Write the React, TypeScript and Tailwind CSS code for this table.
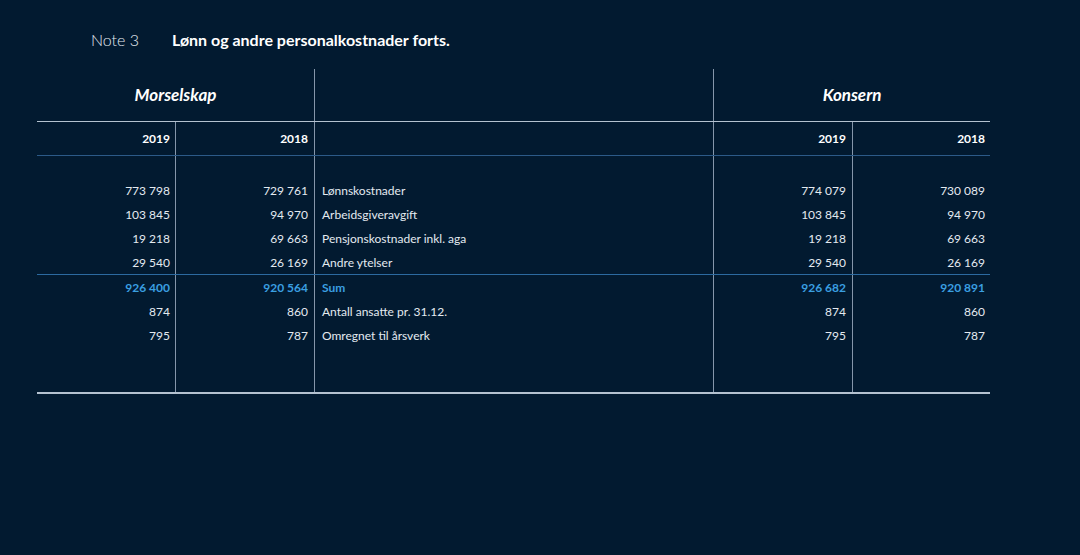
const COLS = "grid grid-cols-[139px_139px_399px_139px_137px]";

type Row = { a: string; b: string; label: string; c: string; d: string; sum?: boolean };

const ROWS: Row[] = [
  { a: "773 798", b: "729 761", label: "Lønnskostnader", c: "774 079", d: "730 089" },
  { a: "103 845", b: "94 970", label: "Arbeidsgiveravgift", c: "103 845", d: "94 970" },
  { a: "19 218", b: "69 663", label: "Pensjonskostnader inkl. aga", c: "19 218", d: "69 663" },
  { a: "29 540", b: "26 169", label: "Andre ytelser", c: "29 540", d: "26 169" },
];

const ROWS2: Row[] = [
  { a: "926 400", b: "920 564", label: "Sum", c: "926 682", d: "920 891", sum: true },
  { a: "874", b: "860", label: "Antall ansatte pr. 31.12.", c: "874", d: "860" },
  { a: "795", b: "787", label: "Omregnet til årsverk", c: "795", d: "787" },
];

function DataRow({ r }: { r: Row }) {
  const tone = r.sum ? "text-[#3a9fe0] font-bold" : "text-[#e4eaf0]";
  return (
    <div className={`${COLS} h-6 text-[12px] ${tone}`}>
      <div className="border-r border-[#8596aa] pr-[5px] pt-px flex items-center justify-end">{r.a}</div>
      <div className="border-r border-[#8596aa] pr-[6px] pt-px flex items-center justify-end">{r.b}</div>
      <div className="border-r border-[#8596aa] pl-[7px] pt-px flex items-center">{r.label}</div>
      <div className="border-r border-[#8596aa] pr-[6px] pt-px flex items-center justify-end">{r.c}</div>
      <div className="pr-[5px] pt-px flex items-center justify-end">{r.d}</div>
    </div>
  );
}

function Blank({ h }: { h: string }) {
  return (
    <div className={`${COLS} ${h}`}>
      <div className="border-r border-[#8596aa]" />
      <div className="border-r border-[#8596aa]" />
      <div className="border-r border-[#8596aa]" />
      <div className="border-r border-[#8596aa]" />
      <div />
    </div>
  );
}

export default function App() {
  return (
    <div className="w-[1080px] h-[555px] bg-[#021a30] text-white font-['Lato',sans-serif] overflow-hidden">
      <div className="flex items-baseline pl-[91px] pt-[28px] h-[69px]">
        <span className="w-[81px] text-[16px] font-light text-[#e4eaf0]">Note 3</span>
        <span className="text-[16px] font-bold">Lønn og andre personalkostnader forts.</span>
      </div>

      <div className="ml-[37px] w-[953px]">
        {/* Header */}
        <div className="grid grid-cols-[278px_399px_276px] h-[53px] border-b border-[#b4c2d0]">
          <div className="border-r border-[#8596aa] flex items-center justify-center text-[17px] font-bold italic">
            Morselskap
          </div>
          <div className="border-r border-[#8596aa]" />
          <div className="flex items-center justify-center text-[17px] font-bold italic">Konsern</div>
        </div>

        <div className={`${COLS} h-[34px] border-b border-[#2c5a88] text-[12px] font-bold`}>
          <div className="border-r border-[#8596aa] pr-[5px] flex items-center justify-end">2019</div>
          <div className="border-r border-[#8596aa] pr-[6px] flex items-center justify-end">2018</div>
          <div className="border-r border-[#8596aa]" />
          <div className="border-r border-[#8596aa] pr-[6px] flex items-center justify-end">2019</div>
          <div className="pr-[5px] flex items-center justify-end">2018</div>
        </div>

        <Blank h="h-[22px]" />
        <div className="border-b border-[#2c6aa0]">
          {ROWS.map((r) => (
            <DataRow key={r.label} r={r} />
          ))}
        </div>
        {ROWS2.map((r) => (
          <DataRow key={r.label} r={r} />
        ))}
        <div className="border-b-2 border-[#b4c2d0]">
          <Blank h="h-[45px]" />
        </div>
      </div>
    </div>
  );
}
